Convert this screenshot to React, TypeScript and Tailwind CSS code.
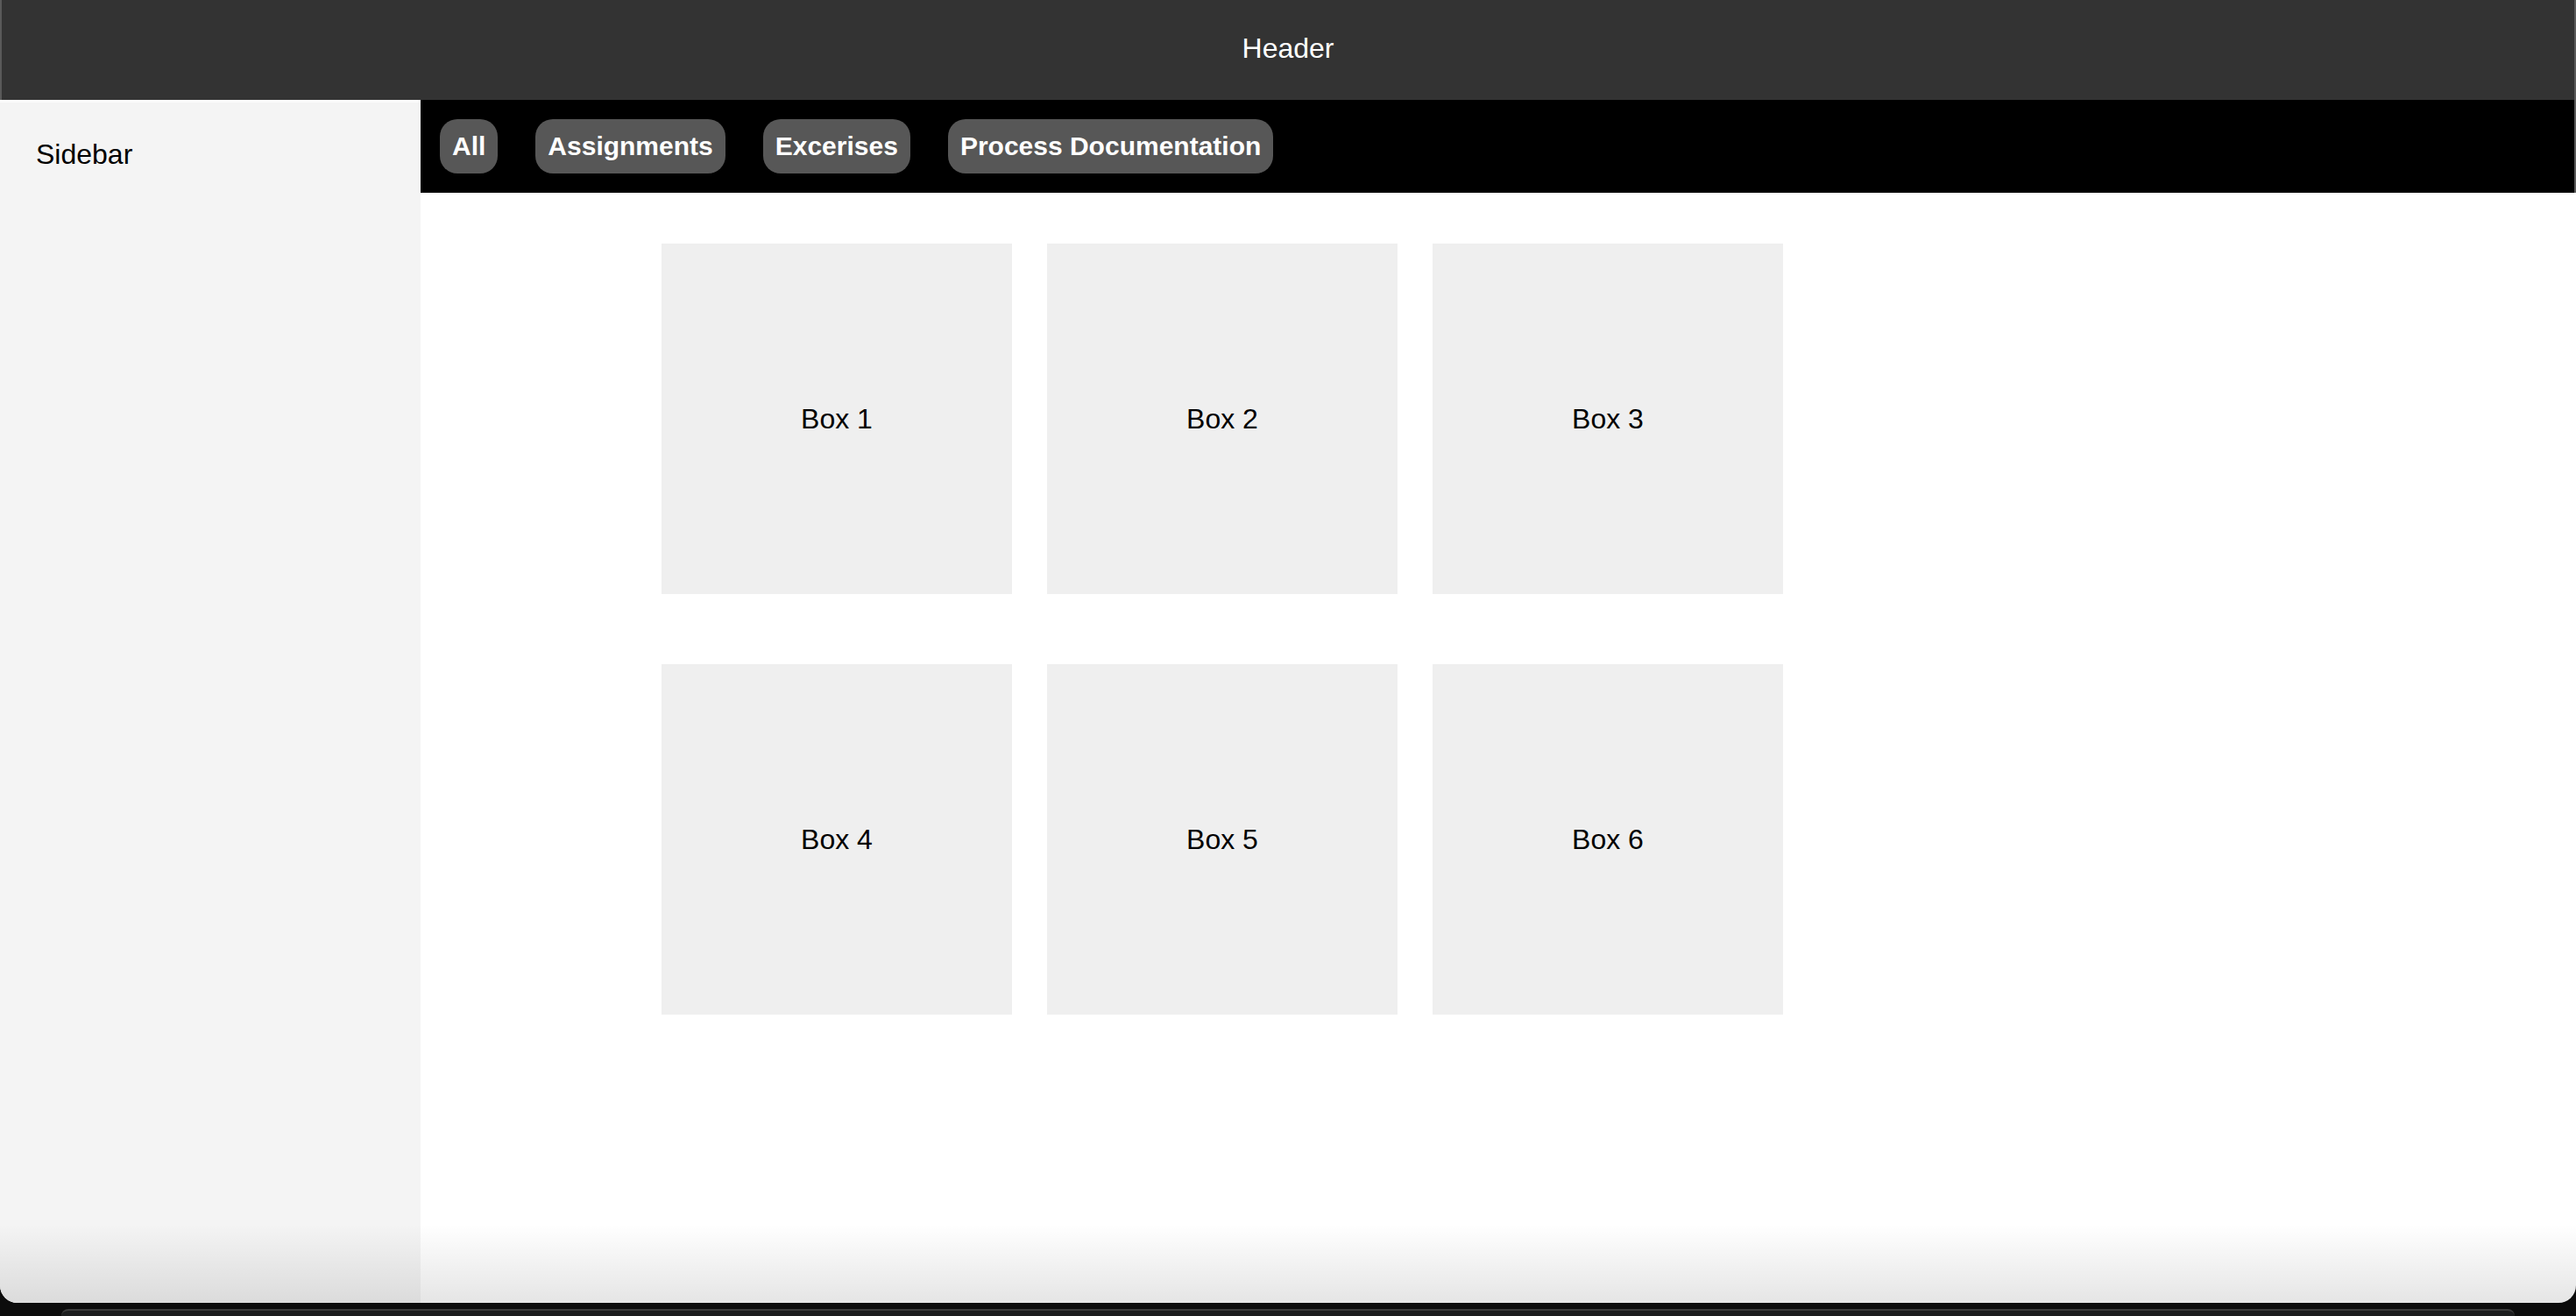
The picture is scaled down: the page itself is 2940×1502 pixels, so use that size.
import React from "react";

const filters = ["All", "Assignments", "Excerises", "Process Documentation"];
const boxes = ["Box 1", "Box 2", "Box 3", "Box 4", "Box 5", "Box 6"];

export default function App() {
  return (
    <div
      className="w-[2940px] h-[1502px] bg-[#0c0c0c] flex flex-col overflow-hidden"
      style={{ fontFamily: '"Liberation Sans", Arial, sans-serif' }}
    >
      <div className="relative h-[1487px] shrink-0 flex flex-col bg-white rounded-b-[20px] overflow-hidden">
        <header className="h-[114px] shrink-0 bg-[#333333] border-x-2 border-[#5a5a5a] flex items-center justify-center pb-[4px]">
          <span className="text-white text-[32px] leading-none">Header</span>
        </header>
        <div className="flex flex-1 min-h-0">
          <aside className="w-[480px] shrink-0 bg-[#f4f4f4] border-t-[3px] border-[#fbfbfb] pt-[35px] pl-[41px]">
            <span className="text-black text-[32px]">Sidebar</span>
          </aside>
          <main className="flex-1 flex flex-col min-w-0">
            <nav className="h-[106px] shrink-0 bg-black border-r-2 border-[#5a5a5a] flex items-center gap-[43px] px-[22px]">
              {filters.map((f) => (
                <button
                  key={f}
                  className="h-[62px] px-[14px] rounded-[20px] bg-[#575757] text-white font-bold text-[30px] leading-none whitespace-nowrap"
                >
                  {f}
                </button>
              ))}
            </nav>
            <section className="pl-[275px] pt-[58px]">
              <div className="grid grid-cols-[400px_400px_400px] gap-x-[40px] gap-y-[80px]">
                {boxes.map((b) => (
                  <div
                    key={b}
                    className="w-[400px] h-[400px] bg-[#efefef] flex items-center justify-center text-black text-[32px]"
                  >
                    {b}
                  </div>
                ))}
              </div>
            </section>
          </main>
        </div>
        <div className="pointer-events-none absolute left-0 right-0 bottom-0 h-[90px] bg-gradient-to-b from-transparent to-[rgba(0,0,0,0.1)]" />
      </div>
      <div className="flex-1 px-[70px] pt-[7px]">
        <div className="h-full bg-[#1c1d1e] border-t-2 border-[#3c3c3c] rounded-t-[16px]" />
      </div>
    </div>
  );
}
